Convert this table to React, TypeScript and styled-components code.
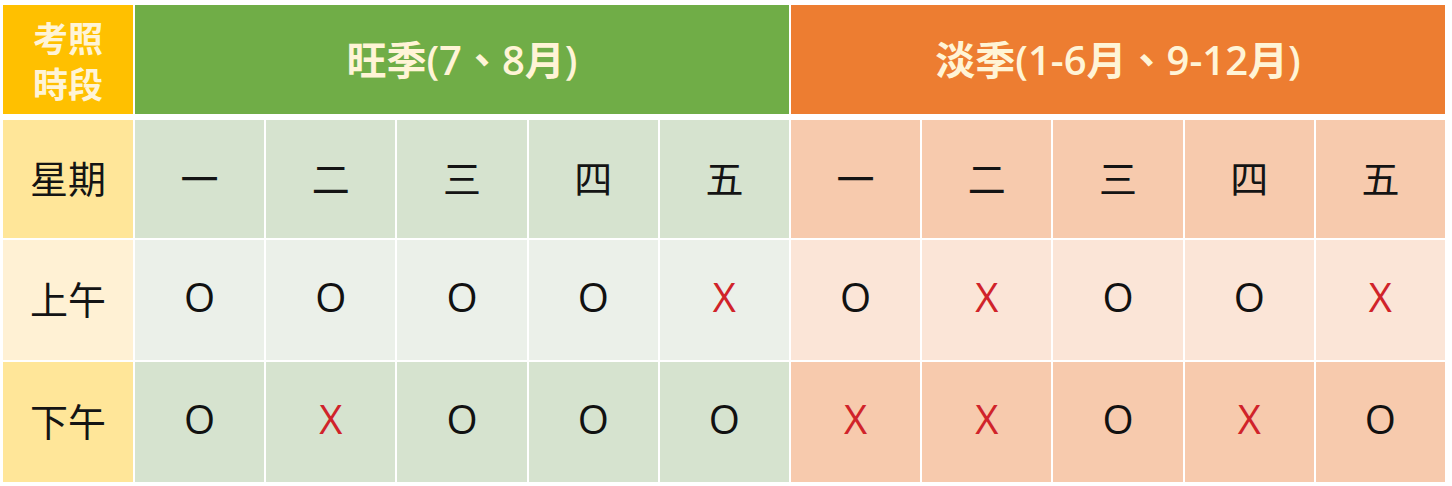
import React, { FC } from "react";
import styled, { createGlobalStyle } from "styled-components";

//******** DATA ********//

type Mark = "O" | "X";

const days = ["一", "二", "三", "四", "五"];

const sessions: { label: string; peak: Mark[]; off: Mark[] }[] = [
  { label: "上午", peak: ["O", "O", "O", "O", "X"], off: ["O", "X", "O", "O", "X"] },
  { label: "下午", peak: ["O", "X", "O", "O", "O"], off: ["X", "X", "O", "X", "O"] },
];

type Tone = "peak" | "off";
type Shade = "mid" | "light";

const palette = {
  peak: { mid: "#d6e3cf", light: "#ebf0e9" },
  off: { mid: "#f7caad", light: "#fbe5d7" },
  side: { mid: "#ffe699", light: "#fff1d4" },
};

//******** COMPONENTS ********//

const App: FC = () => {
  return (
    <>
      <GlobalStyle />
      <SPage>
        <STable>
          <SCorner>
            考照
            <br />
            時段
          </SCorner>
          <SSeason $tone="peak">旺季(7、8月)</SSeason>
          <SSeason $tone="off">淡季(1-6月、9-12月)</SSeason>

          <SSide $shade="mid">星期</SSide>
          {days.map((d) => (
            <SCell key={`p${d}`} $tone="peak" $shade="mid">
              {d}
            </SCell>
          ))}
          {days.map((d) => (
            <SCell key={`o${d}`} $tone="off" $shade="mid">
              {d}
            </SCell>
          ))}

          {sessions.map((s, i) => {
            const shade: Shade = i === 0 ? "light" : "mid";
            return (
              <React.Fragment key={s.label}>
                <SSide $shade={shade}>{s.label}</SSide>
                {s.peak.map((m, j) => (
                  <SCell key={`p${j}`} $tone="peak" $shade={shade}>
                    <SMark $no={m === "X"}>{m}</SMark>
                  </SCell>
                ))}
                {s.off.map((m, j) => (
                  <SCell key={`o${j}`} $tone="off" $shade={shade}>
                    <SMark $no={m === "X"}>{m}</SMark>
                  </SCell>
                ))}
              </React.Fragment>
            );
          })}
        </STable>
      </SPage>
    </>
  );
};

export default App;

//******** STYLES ********//

const GlobalStyle = createGlobalStyle`
  html, body {
    margin: 0;
    padding: 0;
    background: #ffffff;
  }
  body {
    font-family: "Noto Sans CJK TC", "Noto Sans", sans-serif;
    color: #141414;
  }
`;

const SPage = styled.div`
  padding: 5px 0 0 3px;
`;

const STable = styled.div`
  display: grid;
  width: 1442px;
  grid-template-columns: 130px repeat(10, 1fr);
  grid-template-rows: 113px 118px 120px 120px;
  column-gap: 2px;
  row-gap: 2px;
`;

const SHeadBase = styled.div`
  margin-bottom: 4px;
  display: flex;
  align-items: center;
  justify-content: center;
  color: #fff4d6;
  font-weight: 700;
`;

const SCorner = styled(SHeadBase)`
  background: #ffc000;
  font-size: 35px;
  line-height: 46px;
  text-align: center;
`;

const SSeason = styled(SHeadBase)<{ $tone: Tone }>`
  grid-column: span 5;
  background: ${({ $tone }) => ($tone === "peak" ? "#70ad47" : "#ed7d31")};
  font-family: "Open Sans", "Noto Sans CJK TC", sans-serif;
  font-size: 40px;
  font-weight: 600;
  padding-bottom: 4px;
`;

const SSide = styled.div<{ $shade: Shade }>`
  display: flex;
  align-items: center;
  justify-content: center;
  padding-bottom: 6px;
  background: ${({ $shade }) => palette.side[$shade]};
  font-size: 38px;
  font-weight: 400;
`;

const SCell = styled.div<{ $tone: Tone; $shade: Shade }>`
  display: flex;
  align-items: center;
  justify-content: center;
  padding-bottom: 6px;
  background: ${({ $tone, $shade }) => palette[$tone][$shade]};
  font-size: 38px;
  font-weight: 400;
`;

const SMark = styled.span<{ $no: boolean }>`
  font-family: "Open Sans", "Noto Sans", sans-serif;
  font-size: 40px;
  line-height: 1;
  font-weight: ${({ $no }) => ($no ? 500 : 400)};
  color: ${({ $no }) => ($no ? "#d0232a" : "#111111")};
`;
